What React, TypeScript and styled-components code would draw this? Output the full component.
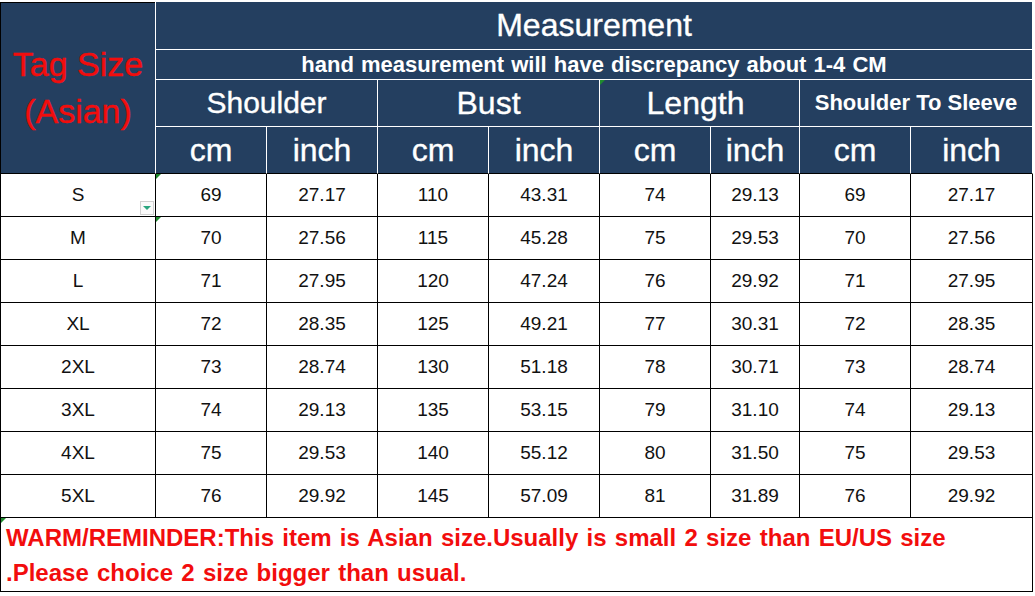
import React from "react";
import styled, { createGlobalStyle } from "styled-components";

const GlobalStyle = createGlobalStyle`
  html, body {
    margin: 0;
    padding: 0;
    background: #ffffff;
  }
  body {
    font-family: "Liberation Sans", Arial, sans-serif;
  }
`;

const NAVY = "#243f60";

const Page = styled.div`
  width: 1035px;
  height: 596px;
  padding-top: 2px;
  box-sizing: border-box;
  background: #ffffff;
  overflow: hidden;
`;

const Sheet = styled.div`
  display: grid;
  grid-template-columns: 155px 111px 111px 111px 111px 111px 89px 111px 122px;
  grid-template-rows: 48px 30px 47px 47px repeat(8, 43px) 74px;
  border-left: 1px solid #000;
  width: max-content;
`;

const HeadBase = styled.div`
  position: relative;
  box-sizing: border-box;
  background: ${NAVY};
  color: #ffffff;
  display: flex;
  align-items: center;
  justify-content: center;
  white-space: nowrap;
  border-right: 1px solid #ffffff;
  border-bottom: 1px solid #ffffff;
  -webkit-text-stroke: 0.35px #ffffff;
`;

const TagHead = styled(HeadBase)`
  grid-column: 1;
  grid-row: 1 / span 4;
  flex-direction: column;
  color: #f20d0d;
  -webkit-text-stroke: 0.4px #f20d0d;
  font-size: 34px;
  line-height: 47px;
  border-bottom-color: #000;
  box-shadow: inset 0 1px 0 #000;
`;

const TitleCell = styled(HeadBase)`
  grid-column: 2 / span 8;
  grid-row: 1;
  font-size: 32px;
`;

const NoteCell = styled(HeadBase)`
  grid-column: 2 / span 8;
  grid-row: 2;
  font-size: 22px;
  font-weight: bold;
  word-spacing: 1px;
  -webkit-text-stroke: 0;
`;

const GroupCell = styled(HeadBase)<{ $small?: boolean; $size?: number; $shift?: number }>`
  grid-column: span 2;
  grid-row: 3;
  font-size: ${(p) => (p.$small ? 22 : p.$size ?? 32)}px;
  font-weight: ${(p) => (p.$small ? "bold" : "normal")};
  padding-right: ${(p) => p.$shift ?? 0}px;
  ${(p) => (p.$small ? "-webkit-text-stroke: 0;" : "")}
`;

const UnitCell = styled(HeadBase)`
  grid-row: 4;
  font-size: 32px;
  border-bottom-color: #000;
`;

const BodyCell = styled.div`
  position: relative;
  box-sizing: border-box;
  display: flex;
  align-items: center;
  justify-content: center;
  font-size: 19px;
  color: #111;
  border-right: 1px solid #000;
  border-bottom: 1px solid #000;
  background: #ffffff;
`;

const SizeCell = styled(BodyCell)`
  grid-column: 1;
`;

const ValueCell = styled(BodyCell)``;

const ReminderCell = styled(BodyCell)`
  grid-column: 1 / span 9;
  flex-direction: column;
  align-items: flex-start;
  justify-content: center;
  padding-left: 5px;
  font-size: 24px;
  font-weight: bold;
  line-height: 35px;
  word-spacing: 1.6px;
  color: #f20d0d;
`;

const CornerMark = styled.span`
  position: absolute;
  top: 0;
  left: 0;
  width: 0;
  height: 0;
  border-top: 5px solid #1f8a2e;
  border-right: 5px solid transparent;
`;

const DropButton = styled.span`
  position: absolute;
  right: 1px;
  bottom: 1px;
  width: 14px;
  height: 14px;
  box-sizing: border-box;
  border: 1px solid #d0d0d0;
  background: #fafafa;
  display: flex;
  align-items: center;
  justify-content: center;
  &::after {
    content: "";
    width: 0;
    height: 0;
    border-left: 4px solid transparent;
    border-right: 4px solid transparent;
    border-top: 4px solid #2aa57f;
  }
`;

const rows: [string, string[]][] = [
  ["S", ["69", "27.17", "110", "43.31", "74", "29.13", "69", "27.17"]],
  ["M", ["70", "27.56", "115", "45.28", "75", "29.53", "70", "27.56"]],
  ["L", ["71", "27.95", "120", "47.24", "76", "29.92", "71", "27.95"]],
  ["XL", ["72", "28.35", "125", "49.21", "77", "30.31", "72", "28.35"]],
  ["2XL", ["73", "28.74", "130", "51.18", "78", "30.71", "73", "28.74"]],
  ["3XL", ["74", "29.13", "135", "53.15", "79", "31.10", "74", "29.13"]],
  ["4XL", ["75", "29.53", "140", "55.12", "80", "31.50", "75", "29.53"]],
  ["5XL", ["76", "29.92", "145", "57.09", "81", "31.89", "76", "29.92"]],
];

const units = ["cm", "inch", "cm", "inch", "cm", "inch", "cm", "inch"];

export default function App() {
  return (
    <>
      <GlobalStyle />
      <Page>
        <Sheet>
          <TagHead>
            <span>Tag Size</span>
            <span>(Asian)</span>
          </TagHead>
          <TitleCell>Measurement</TitleCell>
          <NoteCell>hand measurement will have discrepancy about 1-4 CM</NoteCell>
          <GroupCell $size={30}>Shoulder</GroupCell>
          <GroupCell>Bust</GroupCell>
          <GroupCell $shift={8}>
            <CornerMark />
            Length
          </GroupCell>
          <GroupCell $small>Shoulder To Sleeve</GroupCell>
          {units.map((u, i) => (
            <UnitCell key={i}>{u}</UnitCell>
          ))}
          {rows.map(([size, vals], r) => (
            <React.Fragment key={size}>
              <SizeCell>
                {size}
                {r === 0 && <DropButton />}
              </SizeCell>
              {vals.map((v, i) => (
                <ValueCell key={i}>
                  {i === 0 && r < 2 && <CornerMark />}
                  {v}
                </ValueCell>
              ))}
            </React.Fragment>
          ))}
          <ReminderCell>
            <CornerMark />
            <span>
              WARM/REMINDER:This item is Asian size.Usually is small 2 size than EU/US size
            </span>
            <span>.Please choice 2 size bigger than usual.</span>
          </ReminderCell>
        </Sheet>
      </Page>
    </>
  );
}
